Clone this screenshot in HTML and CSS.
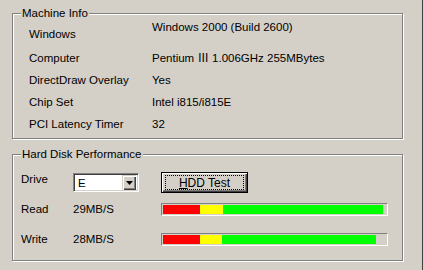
FILE: index.html
```html
<!DOCTYPE html>
<html lang="en">
<head>
  <meta charset="UTF-8">
  <title>Machine Info</title>
  <link rel="stylesheet" href="styles.css">
</head>
<body>
  <div class="page">
    <div class="group info">
      <span class="group-title">Machine Info</span>
      <div class="info-row first">
        <span class="key">Windows</span>
        <span class="val">Windows 2000 (Build 2600)</span>
      </div>
      <div class="info-row">
        <span class="key">Computer</span>
        <span class="val">Pentium Ⅲ 1.006GHz 255MBytes</span>
      </div>
      <div class="info-row">
        <span class="key">DirectDraw Overlay</span>
        <span class="val">Yes</span>
      </div>
      <div class="info-row">
        <span class="key">Chip Set</span>
        <span class="val">Intel i815/i815E</span>
      </div>
      <div class="info-row">
        <span class="key">PCI Latency Timer</span>
        <span class="val">32</span>
      </div>
    </div>

    <div class="group hdd">
      <span class="group-title">Hard Disk Performance</span>
      <div class="hdd-row drive-row">
        <span class="key">Drive</span>
        <div class="combo">
          <span class="combo-text">E</span>
          <span class="combo-btn">
            <svg width="7" height="4" viewBox="0 0 7 4"><path d="M0 0h7L3.5 4z" fill="#000"/></svg>
          </span>
        </div>
        <button class="btn"><span class="focus"><u>H</u>DD Test</span></button>
      </div>
      <div class="hdd-row read-row">
        <span class="key">Read</span>
        <span class="speed">29MB/S</span>
        <div class="meter">
          <span class="seg red" style="width: 37px"></span>
          <span class="seg yellow" style="width: 23px"></span>
          <span class="seg green" style="width: 160px"></span>
        </div>
      </div>
      <div class="hdd-row write-row">
        <span class="key">Write</span>
        <span class="speed">28MB/S</span>
        <div class="meter">
          <span class="seg red" style="width: 37px"></span>
          <span class="seg yellow" style="width: 22px"></span>
          <span class="seg green" style="width: 154px"></span>
        </div>
      </div>
    </div>
  </div>
</body>
</html>
```

FILE: styles.css
```css
:root {
  --face: #d4d0c8;
  --shadow: #808080;
  --dark: #404040;
  --light: #fff;
  --font-ui: "Liberation Sans", "Noto Sans CJK JP", sans-serif;
}

body {
  margin: 0;
  background: var(--face);
  color: #000;
  font-family: var(--font-ui);
  font-size: 11.5px;
  line-height: 14px;
}

.page {
  height: 270px;
  box-sizing: border-box;
  padding: 13px 19px 0 12px;
  border-right: 1px solid var(--dark);
}

/* etched group box */
.group {
  position: relative;
  box-sizing: border-box;
  border: 1px solid var(--shadow);
  box-shadow: inset 1px 1px 0 var(--light), 1px 1px 0 var(--light);
}

.group-title {
  position: absolute;
  top: -8px;
  left: 8px;
  padding: 0 1px;
  background: var(--face);
}

.info {
  height: 126px;
  padding: 6px 0 0 16px;
}

.info-row {
  display: grid;
  grid-template-columns: 123px 1fr;
  height: 22px;
  align-items: start;
  line-height: 14px;
  padding-top: 4px;
  box-sizing: border-box;
}

.info-row.first {
  height: 27px;
  padding-top: 0;
}

.info-row.first .key {
  margin-top: 7px;
}

.hdd {
  height: 107px;
  margin-top: 15px;
  padding: 17px 0 0 8px;
}

.hdd-row {
  display: grid;
  grid-template-columns: 52px 88px 1fr;
  align-items: center;
}

.drive-row {
  height: 21px;
}

.drive-row .key {
  align-self: start;
}

.read-row {
  height: 13px;
  margin-top: 9px;
}

.write-row {
  height: 13px;
  margin-top: 17px;
}

.combo {
  display: flex;
  align-items: center;
  width: 66px;
  height: 19px;
  box-sizing: border-box;
  background: var(--light);
  border-top: 1px solid var(--shadow);
  border-left: 1px solid var(--shadow);
  border-bottom: 1px solid var(--light);
  border-right: 1px solid var(--light);
  box-shadow: inset 1px 1px 0 var(--dark), inset -1px -1px 0 var(--face);
  padding: 2px 2px 2px 4px;
}

.combo-text {
  flex: 1;
}

.combo-btn {
  width: 14px;
  height: 15px;
  box-sizing: border-box;
  display: flex;
  align-items: center;
  justify-content: center;
  background: var(--face);
  box-shadow: inset 1px 1px 0 var(--face), inset 2px 2px 0 var(--light),
    inset -1px -1px 0 var(--dark), inset -2px -2px 0 var(--shadow);
}

.btn {
  display: flex;
  width: 87px;
  height: 21px;
  box-sizing: border-box;
  padding: 2px 3px;
  border: 1px solid #000;
  background: var(--face);
  box-shadow: inset 1px 1px 0 var(--light), inset -1px -1px 0 var(--dark),
    inset -2px -2px 0 var(--shadow);
  font: inherit;
  font-size: 12px;
  color: #000;
}

.focus {
  flex: 1;
  display: flex;
  align-items: center;
  justify-content: center;
  border: 1px dotted #000;
}

.meter {
  display: flex;
  width: 227px;
  height: 13px;
  box-sizing: border-box;
  padding: 1px;
  border-top: 1px solid var(--shadow);
  border-left: 1px solid var(--shadow);
  border-bottom: 1px solid var(--light);
  border-right: 1px solid var(--light);
}

.seg {
  height: 9px;
}

.red { background: #f00; }
.yellow { background: #ff0; }
.green { background: #0f0; }
```
